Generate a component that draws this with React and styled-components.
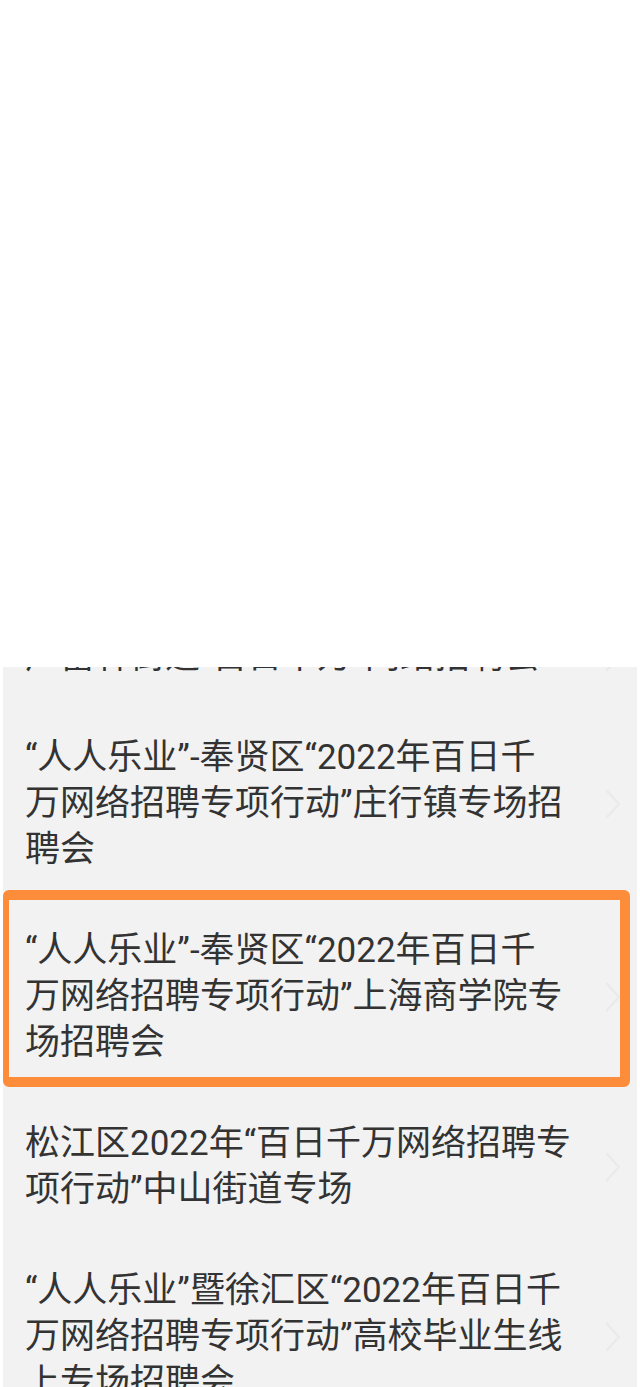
import styled, { createGlobalStyle } from "styled-components";

const GlobalStyle = createGlobalStyle`
  html, body {
    margin: 0;
    padding: 0;
    background: #fff;
  }
  body {
    font-family: Roboto, "Noto Sans CJK SC", sans-serif;
  }
`;

// titles are kept as the lines the app shows them in
const items = [
  { lines: ["广富林街道“百日千万”网络招聘会"] },
  {
    lines: [
      "“人人乐业”-奉贤区“2022年百日千",
      "万网络招聘专项行动”庄行镇专场招",
      "聘会",
    ],
  },
  {
    lines: [
      "“人人乐业”-奉贤区“2022年百日千",
      "万网络招聘专项行动”上海商学院专",
      "场招聘会",
    ],
    marked: true,
  },
  { lines: ["松江区2022年“百日千万网络招聘专", "项行动”中山街道专场"] },
  {
    lines: [
      "“人人乐业”暨徐汇区“2022年百日千",
      "万网络招聘专项行动”高校毕业生线",
      "上专场招聘会",
    ],
  },
];

const Chevron = () => (
  <svg width="16" height="30" viewBox="0 0 16 30" fill="none">
    <polyline
      points="2,2 14,15 2,28"
      stroke="#eaeaea"
      strokeWidth="2.5"
      strokeLinecap="round"
      strokeLinejoin="round"
    />
  </svg>
);

const App = () => {
  return (
    <Page>
      <GlobalStyle />
      <Blank />
      <ListPanel>
        <List>
          {items.map((item, i) => (
            <Item key={i} $marked={item.marked}>
              <Title>
                {item.lines.map((line, j) => (
                  <Line key={j}>{line}</Line>
                ))}
              </Title>
              <Arrow>
                <Chevron />
              </Arrow>
            </Item>
          ))}
        </List>
      </ListPanel>
    </Page>
  );
};

const Page = styled.div`
  width: 640px;
  height: 1387px;
  overflow: hidden;
  display: flex;
  flex-direction: column;
`;

const Blank = styled.div`
  height: 667px;
  flex-shrink: 0;
  background: #fff;
`;

const ListPanel = styled.div`
  flex: 1;
  margin: 0 3px;
  background: #f2f2f2;
  overflow: hidden;
`;

/* list is scrolled so only the tail of the first row shows */
const List = styled.ul`
  list-style: none;
  margin: -60px 0 0;
  padding: 0;
`;

const Item = styled.li`
  position: relative;
  display: flex;
  align-items: center;
  padding: 27px 16px 28px 22px;
  gap: 20px;

  ${({ $marked }) =>
    $marked &&
    `
    &::after {
      content: "";
      position: absolute;
      top: -11px;
      left: 0;
      right: 7px;
      bottom: 7px;
      border: 10px solid #fd8c3b;
      border-left-width: 6px;
      border-radius: 6px;
      pointer-events: none;
    }
  `}
`;

const Title = styled.div`
  flex: 1;
  min-width: 0;
  font-size: 35px;
  line-height: 46px;
  color: #333;
`;

const Line = styled.span`
  display: block;
  white-space: nowrap;
`;

const Arrow = styled.div`
  display: flex;
  align-items: center;
  width: 16px;
`;

export default App;
